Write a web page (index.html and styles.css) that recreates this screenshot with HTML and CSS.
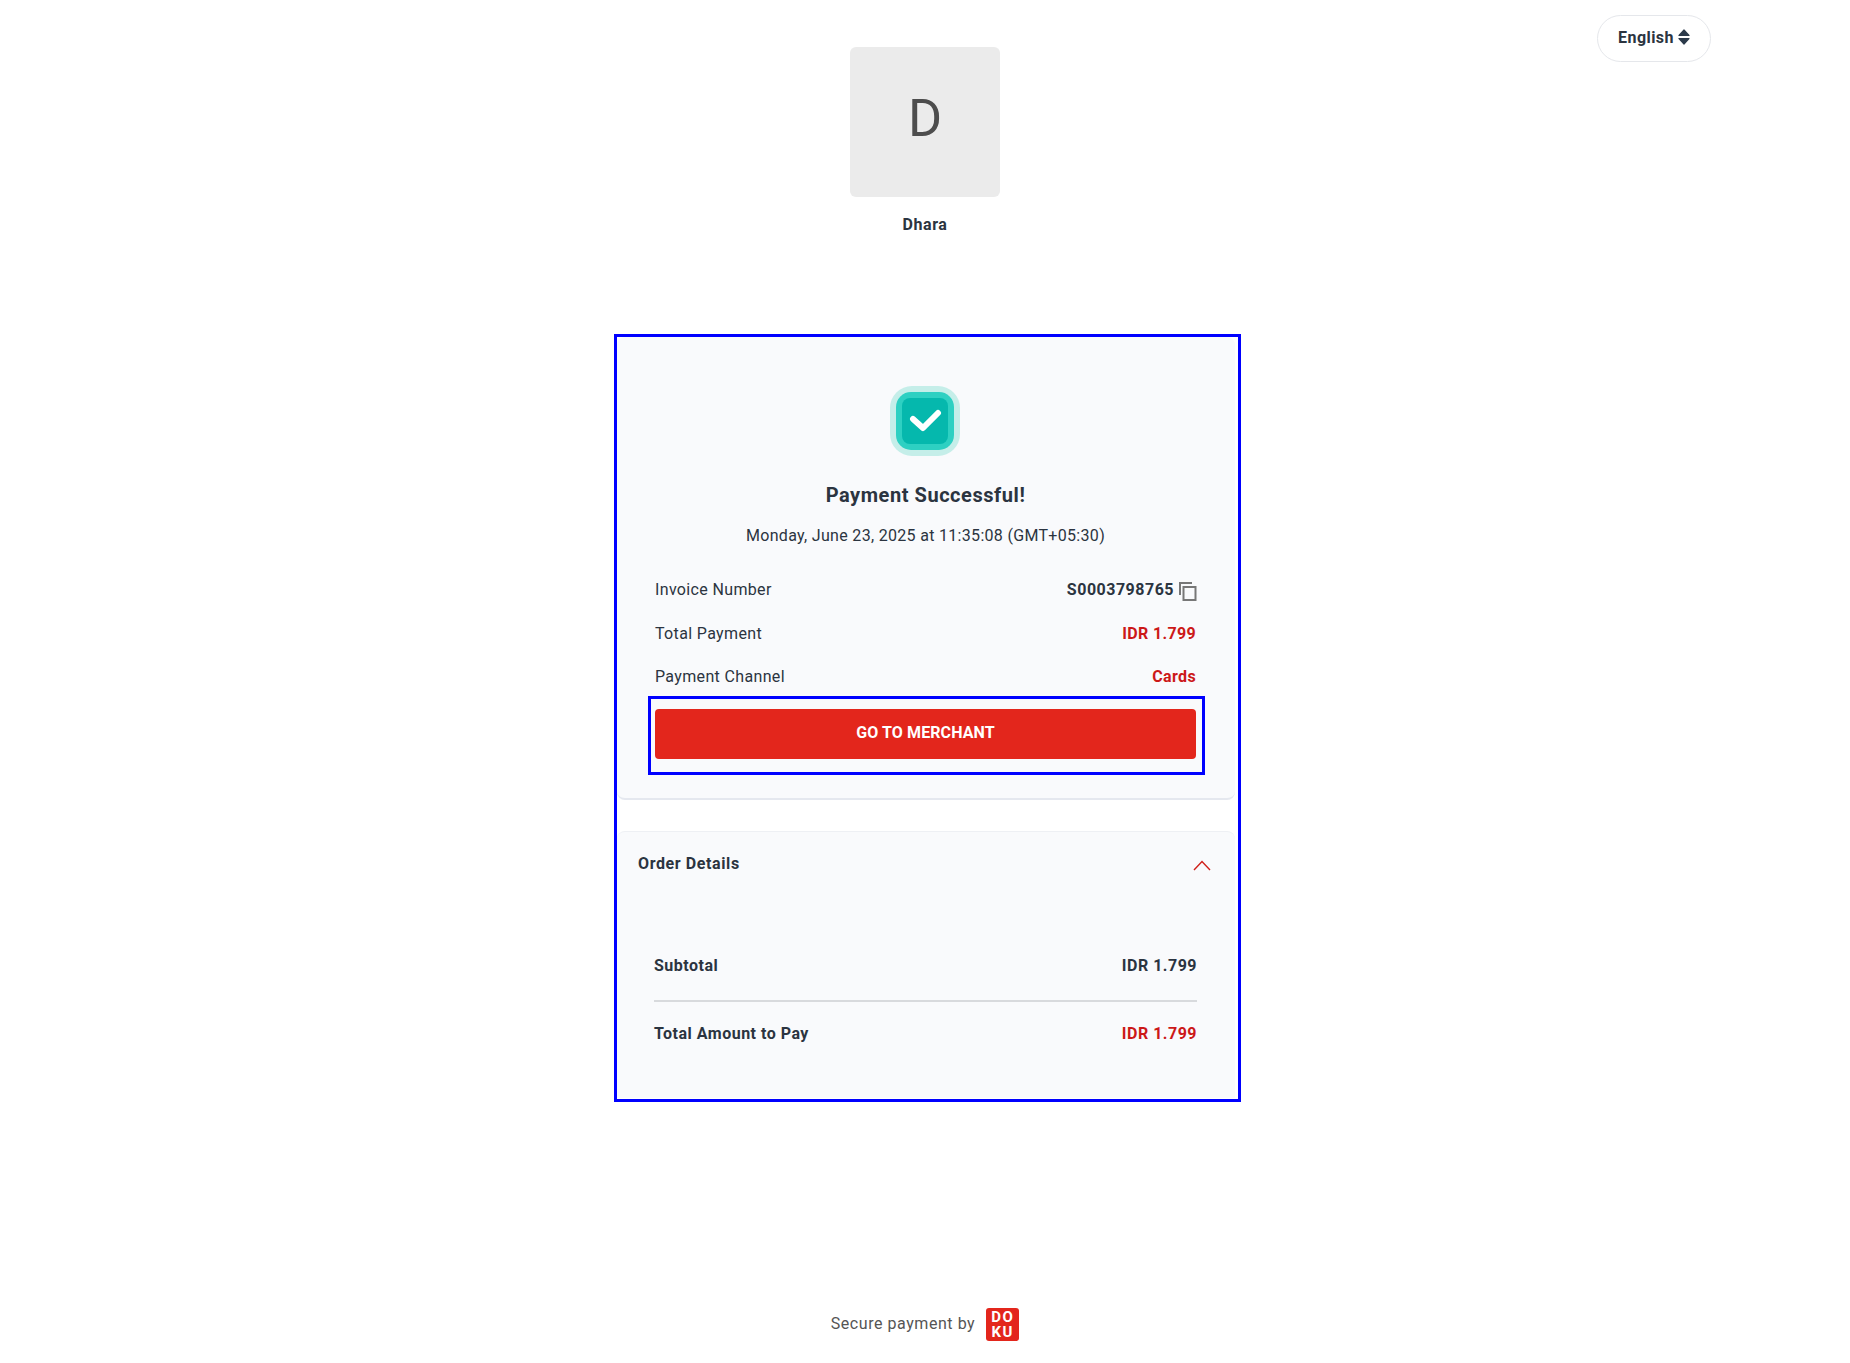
FILE: index.html
```html
<!DOCTYPE html>
<html lang="en">
<head>
    <meta charset="UTF-8">
    <meta name="viewport" content="width=device-width, initial-scale=1.0">
    <title>Payment Successful</title>
    <link rel="stylesheet" href="styles.css">
</head>
<body>
    <div class="page">
        <header class="top">
            <div></div>
            <div class="merchant">
                <div class="merchant-logo">D</div>
                <div class="merchant-name">Dhara</div>
            </div>
            <button type="button" class="lang">
                English
                <svg width="12" height="16" viewBox="0 0 12 16">
                    <path d="M6 1 L11 6.5 H1 Z M1 9.5 H11 L6 15 Z" fill="#2c3a4b" stroke="#2c3a4b" stroke-width="1.2" stroke-linejoin="round"/>
                </svg>
            </button>
        </header>

        <main class="frame">
            <section class="card result">
                <div class="status">
                    <div class="status-mid">
                        <div class="status-inner">
                            <svg width="34" height="28" viewBox="0 0 34 28">
                                <path d="M5 12 L15 21 L30 6" fill="none" stroke="#fff" stroke-width="6" stroke-linecap="round" stroke-linejoin="round"/>
                            </svg>
                        </div>
                    </div>
                </div>
                <h1 class="title">Payment Successful!</h1>
                <p class="date">Monday, June 23, 2025 at 11:35:08 (GMT+05:30)</p>

                <div class="row">
                    <span>Invoice Number</span>
                    <span class="val val-id">S0003798765
                        <svg class="copy" width="18" height="19" viewBox="0 0 18 19">
                            <path d="M1 13 V1 H13" fill="none" stroke="#777" stroke-width="2"/>
                            <rect x="4.5" y="5" width="12" height="13" fill="none" stroke="#777" stroke-width="2"/>
                        </svg>
                    </span>
                </div>
                <div class="row">
                    <span>Total Payment</span>
                    <span class="val red">IDR 1.799</span>
                </div>
                <div class="row">
                    <span>Payment Channel</span>
                    <span class="val red">Cards</span>
                </div>

                <div class="btn-frame">
                    <button type="button" class="btn">GO TO MERCHANT</button>
                </div>
            </section>

            <section class="card order">
                <div class="order-head">
                    <span>Order Details</span>
                    <svg class="chevron" width="20" height="12" viewBox="0 0 20 12">
                        <path d="M2 11 L10 2.5 L18 11" fill="none" stroke="#d0201a" stroke-width="1.4"/>
                    </svg>
                </div>
                <div class="sum sum-first">
                    <span>Subtotal</span>
                    <span>IDR 1.799</span>
                </div>
                <div class="sum sum-last">
                    <span>Total Amount to Pay</span>
                    <span class="red">IDR 1.799</span>
                </div>
            </section>
        </main>

        <footer class="foot">
            <span>Secure payment by</span>
            <div class="doku">DO<br>KU</div>
        </footer>
    </div>
</body>
</html>
```

FILE: styles.css
```css
body {
    margin: 0;
    font-family: Roboto, Arial, sans-serif;
    background-color: #fff;
    color: #2b3440;
}

.page {
    height: 1363px;
    overflow: hidden;
}

.top {
    display: grid;
    grid-template-columns: 1fr 150px 1fr;
    padding-top: 15px;
}

.merchant {
    padding-top: 32px;
    text-align: center;
}

.merchant-logo {
    width: 150px;
    height: 150px;
    display: flex;
    align-items: center;
    justify-content: center;
    background: #ebebeb;
    border-radius: 6px;
    color: #4d4d4d;
    font-size: 52px;
    padding-bottom: 8px;
    box-sizing: border-box;
}

.merchant-name {
    margin-top: 18px;
    font-size: 16px;
    font-weight: 700;
    letter-spacing: 0.6px;
    line-height: 20px;
}

.lang {
    justify-self: end;
    width: 114px;
    height: 47px;
    margin-right: 139px;
    display: flex;
    align-items: center;
    justify-content: center;
    gap: 4px;
    background: #fff;
    border: 1px solid #e5e7eb;
    border-radius: 24px;
    color: #2b3440;
    font-family: inherit;
    font-size: 16px;
    font-weight: 700;
    letter-spacing: 0.45px;
    padding: 0 0 3px;
}

.frame {
    width: 618px;
    height: 762px;
    margin: 99px 0 0 614px;
    padding-right: 3px;
    border: 3px solid #0000ff;
}

.card {
    background: #f9fafc;
    border-radius: 8px;
}

.result {
    height: 463px;
    box-sizing: border-box;
    padding: 49px 39px 0 38px;
    border-bottom: 2px solid #e5e8ef;
}

.status {
    width: 70px;
    height: 70px;
    margin: 0 0 0 235px;
    display: flex;
    align-items: center;
    justify-content: center;
    background: #c5eee9;
    border-radius: 22px;
}

.status-mid {
    width: 58px;
    height: 58px;
    display: flex;
    align-items: center;
    justify-content: center;
    background: #2ed0c2;
    border-radius: 15px;
}

.status-inner {
    width: 46px;
    height: 46px;
    display: flex;
    align-items: center;
    justify-content: center;
    background: #05b8ad;
    border-radius: 8px;
}

.title {
    margin: 24px 0 0;
    font-size: 20px;
    font-weight: 700;
    letter-spacing: 0.55px;
    line-height: 30px;
    text-align: center;
}

.date {
    margin: 14px 0 20px;
    font-size: 16px;
    letter-spacing: 0.31px;
    line-height: 24px;
    text-align: center;
}

.row {
    display: flex;
    justify-content: space-between;
    align-items: center;
    height: 43.5px;
    font-size: 16px;
    letter-spacing: 0.35px;
}

.val {
    display: flex;
    align-items: center;
    gap: 5px;
    font-weight: 700;
}

.val-id {
    letter-spacing: 0.5px;
}

.copy {
    margin: 3px -1px 0 0;
}

.red {
    color: #cc1818;
}

.btn-frame {
    height: 79px;
    box-sizing: border-box;
    margin: -2.5px -9px 0 -7px;
    padding: 10px 6px 0 4px;
    border: 3px solid #0000ff;
}

.btn {
    width: 100%;
    height: 50px;
    padding: 0 0 4px;
    background: #e3261c;
    border: none;
    border-radius: 4px;
    color: #fff;
    font-family: inherit;
    font-size: 16px;
    font-weight: 700;
    letter-spacing: 0.1px;
}

.order {
    height: 267px;
    margin-top: 31px;
    box-sizing: border-box;
    border-top: 1px solid #eef0f4;
    border-radius: 8px 8px 0 0;
    padding: 0 22px 0 21px;
}

.order-head {
    display: flex;
    justify-content: space-between;
    align-items: center;
    height: 62px;
    font-size: 16px;
    font-weight: 700;
    letter-spacing: 0.6px;
}

.chevron {
    margin: 3px 1px 0 0;
}

.sum {
    display: flex;
    justify-content: space-between;
    align-items: center;
    margin: 0 16px;
    font-size: 16px;
    font-weight: 700;
    letter-spacing: 0.5px;
}

.sum-first {
    height: 37px;
    margin-top: 53px;
    padding-bottom: 16px;
    border-bottom: 2px solid #d8dadd;
}

.sum-last {
    height: 62px;
}

.foot {
    display: flex;
    align-items: center;
    justify-content: center;
    gap: 11px;
    margin-top: 204px;
    font-size: 16px;
    letter-spacing: 0.55px;
    color: #555;
}

.doku {
    width: 33px;
    height: 33px;
    margin-top: 2px;
    background: #e3261c;
    border-radius: 3px;
    color: #fff;
    font-size: 15px;
    font-weight: 700;
    letter-spacing: 1.5px;
    line-height: 15px;
    text-align: center;
    padding-top: 2px;
    box-sizing: border-box;
}
```
